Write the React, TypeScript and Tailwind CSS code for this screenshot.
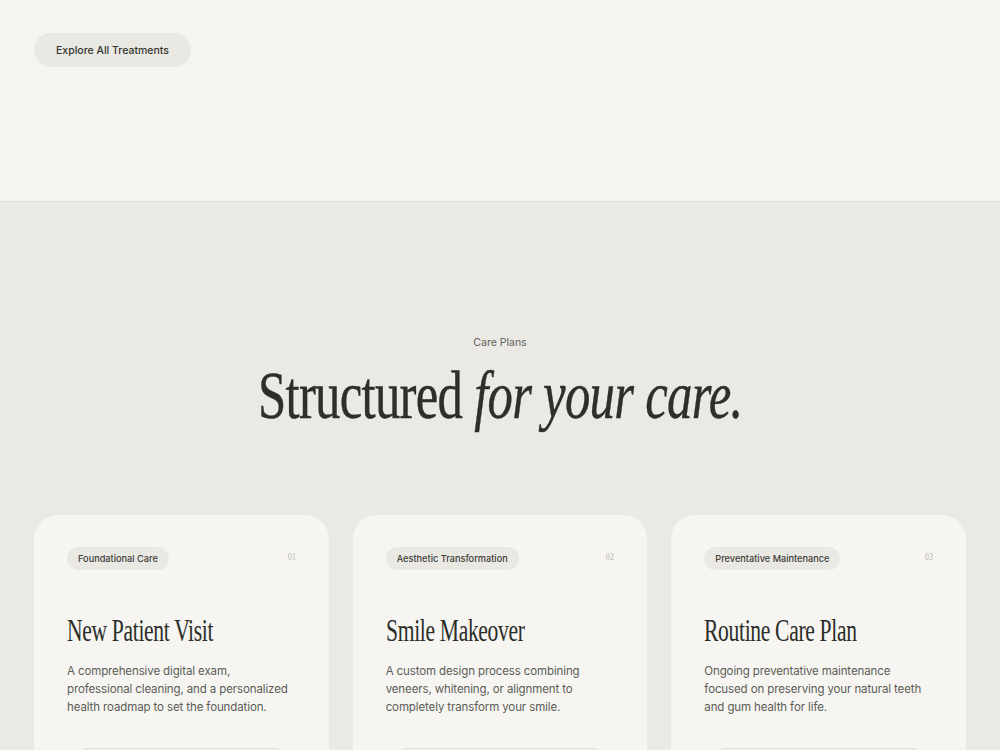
import React from "react";

const plans = [
  {
    tag: "Foundational Care",
    num: "01",
    title: "New Patient Visit",
    text: "A comprehensive digital exam, professional cleaning, and a personalized health roadmap to set the foundation.",
  },
  {
    tag: "Aesthetic Transformation",
    num: "02",
    title: "Smile Makeover",
    text: "A custom design process combining veneers, whitening, or alignment to completely transform your smile.",
  },
  {
    tag: "Preventative Maintenance",
    num: "03",
    title: "Routine Care Plan",
    text: "Ongoing preventative maintenance focused on preserving your natural teeth and gum health for life.",
  },
];

const sans = "font-['Inter','Liberation_Sans',sans-serif]";
const serif = "font-['Liberation_Serif',serif]";

function PlanCard({ tag, num, title, text }: (typeof plans)[number]) {
  return (
    <div className="rounded-[24px] bg-[#f6f5f1] px-[33px] pt-[32px] pb-10">
      <div className="flex items-start justify-between">
        <span className={`${sans} rounded-full bg-[#eae8e3] px-[11px] py-[5px] text-[9.2px] leading-[13px] font-medium text-[#3d3e3a]`}>
          {tag}
        </span>
        <span className={`${serif} mt-[4px] inline-block origin-right scale-x-[0.75] text-[11px] leading-none text-[#b9b7b1]`}>{num}</span>
      </div>
      <h3 className={`${serif} mt-[44px] text-[32px] leading-none text-[#2b2d29] whitespace-nowrap`}>
        <span className="inline-block origin-left scale-x-[0.675] tracking-[-0.5px]">{title}</span>
      </h3>
      <p className={`${sans} mt-[16px] text-[11.5px] leading-[18px] tracking-[-0.01em] text-[#5b5c57]`}>{text}</p>
      <div className="mx-[5px] mt-[32px] h-9 rounded-full border border-[#e2e0da] bg-[#efeee9]" />
    </div>
  );
}

export default function App() {
  return (
    <div className="min-h-[750px] bg-[#ebe9e4]">
      <section className="h-[202px] border-b border-[#dcdad4] bg-[#f5f4f0] px-[34px] pt-[33px]">
        <button className={`${sans} h-[34px] rounded-full bg-[#eae8e3] px-[22px] pt-[1px] text-[10.5px] font-medium text-[#34352f]`}>
          Explore All Treatments
        </button>
      </section>

      <section className="px-[34px] pt-[133px]">
        <div className="flex flex-col items-center text-center">
          <p className={`${sans} text-[10.5px] leading-4 text-[#5f605b]`}>Care Plans</p>
          <h2 className={`${serif} mt-[10px] whitespace-nowrap text-[68px] leading-none text-[#2d2f2a] [-webkit-text-stroke:0.4px_#2d2f2a]`}>
            <span className="inline-block scale-x-[0.747] tracking-[-1px]">
              Structured <em className="italic">for your care.</em>
            </span>
          </h2>
        </div>

        <div className="mt-[86px] grid grid-cols-3 gap-6">
          {plans.map((p) => (
            <PlanCard key={p.num} {...p} />
          ))}
        </div>
      </section>
    </div>
  );
}
